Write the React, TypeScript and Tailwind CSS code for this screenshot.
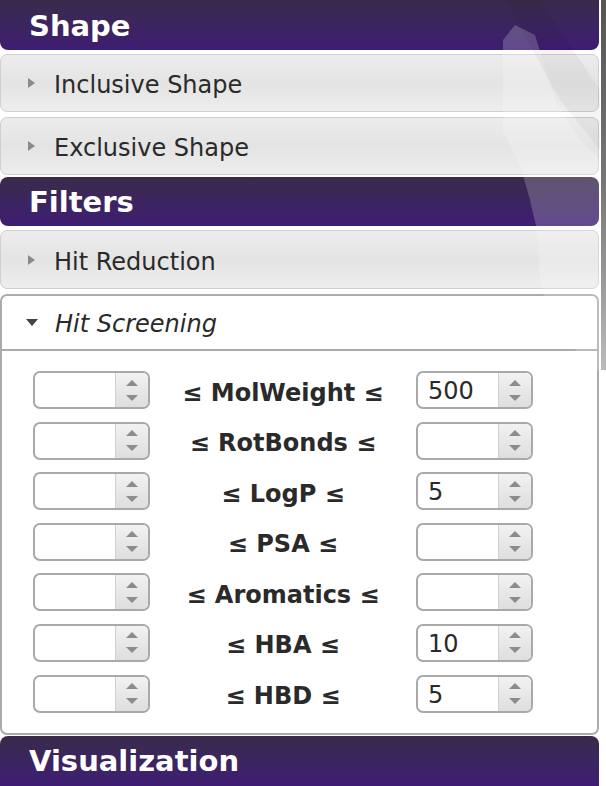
import React from "react";

const font = { fontFamily: '"DejaVu Sans", Verdana, sans-serif' };

const filters = [
  { name: "MolWeight", max: "500" },
  { name: "RotBonds", max: "" },
  { name: "LogP", max: "5" },
  { name: "PSA", max: "" },
  { name: "Aromatics", max: "" },
  { name: "HBA", max: "10" },
  { name: "HBD", max: "5" },
];

function SectionHeader({ title, className }: { title: string; className: string }) {
  return (
    <div
      className={`flex items-center pl-[29px] pt-[3px] bg-gradient-to-b from-[#392a4b] to-[#3f1c73] text-white font-bold text-[29px] ${className}`}
    >
      {title}
    </div>
  );
}

function CollapsedRow({ label, className }: { label: string; className: string }) {
  return (
    <div
      className={`flex items-center gap-[19px] pl-[27px] rounded-[7px] border border-[#cfcfcf] bg-gradient-to-b from-[#ececec] via-[#e4e4e4] to-[#ededed] text-[24px] text-[#2a2a2a] ${className}`}
    >
      <span className="w-0 h-0 border-y-[5px] border-y-transparent border-l-[7px] border-l-[#8a8a8a]" />
      <span className="pt-[4px]">{label}</span>
    </div>
  );
}

function Spinner({ value }: { value: string }) {
  return (
    <div className="flex h-[38px] rounded-[7px] border-2 border-[#a9a9a9] bg-white overflow-hidden">
      <div className="flex-1 flex items-center pl-[10px] pt-[2px] text-[24px] text-[#2a2a2a]">{value}</div>
      <div className="w-[33px] flex flex-col items-center justify-center gap-[9px] border-l border-[#d0d0d0] bg-gradient-to-b from-[#f2f2f2] to-[#dedede]">
        <span className="w-0 h-0 border-x-[6px] border-x-transparent border-b-[6px] border-b-[#8c8c8c]" />
        <span className="w-0 h-0 border-x-[6px] border-x-transparent border-t-[6px] border-t-[#8c8c8c]" />
      </div>
    </div>
  );
}

export default function App() {
  return (
    <div className="relative w-[606px] h-[786px] overflow-hidden bg-white" style={font}>
      <div className="w-[599px] flex flex-col">
        <SectionHeader title="Shape" className="h-[50px] rounded-b-[8px]" />
        <CollapsedRow label="Inclusive Shape" className="mt-[4px] h-[58px]" />
        <CollapsedRow label="Exclusive Shape" className="mt-[5px] h-[58px]" />
        <SectionHeader title="Filters" className="mt-[2px] h-[49px] rounded-[8px]" />
        <CollapsedRow label="Hit Reduction" className="mt-[4px] h-[59px]" />

        {/* Hit Screening (open) */}
        <div className="mt-[5px] rounded-[7px] border-2 border-[#ababab] bg-white">
          <div className="h-[55px] flex items-center gap-[17px] pl-[24px] border-b-2 border-[#ababab] text-[24px] italic text-[#2a2a2a]">
            <span className="w-0 h-0 border-x-[6px] border-x-transparent border-t-[7px] border-t-[#444]" />
            <span className="pt-[2px]">Hit Screening</span>
          </div>
          <div className="pt-[20px] pb-[20px] pl-[31px] flex flex-col gap-[12.6px]">
            {filters.map((f) => (
              <div key={f.name} className="h-[38px] grid grid-cols-[117px_266px_117px] items-center">
                <Spinner value="" />
                <div className="text-center font-bold text-[24px] leading-none text-[#2a2a2a] pt-[5px]">
                  ≤ {f.name} ≤
                </div>
                <Spinner value={f.max} />
              </div>
            ))}
          </div>
        </div>

        <SectionHeader title="Visualization" className="mt-[1px] h-[50px] rounded-t-[8px]" />
      </div>

      {/* scrollbar */}
      <div className="absolute right-0 top-0 w-[5px] h-[370px] bg-gradient-to-b from-[#555] via-[#777] to-[#bbb]" />

      {/* translucent page-curl overlay */}
      <svg className="absolute left-0 top-0 pointer-events-none" width="606" height="786">
        <polygon
          points="503,40 515,25 535,35 555,100 580,140 600,160 600,372 570,345 556,330 548,310 540,280 537,230 530,200 520,165 503,132"
          fill="#ffffff"
          fillOpacity="0.2"
        />
        <polygon points="505,0 540,0 600,90 600,150 560,100" fill="#000" fillOpacity="0.04" />
      </svg>
    </div>
  );
}
